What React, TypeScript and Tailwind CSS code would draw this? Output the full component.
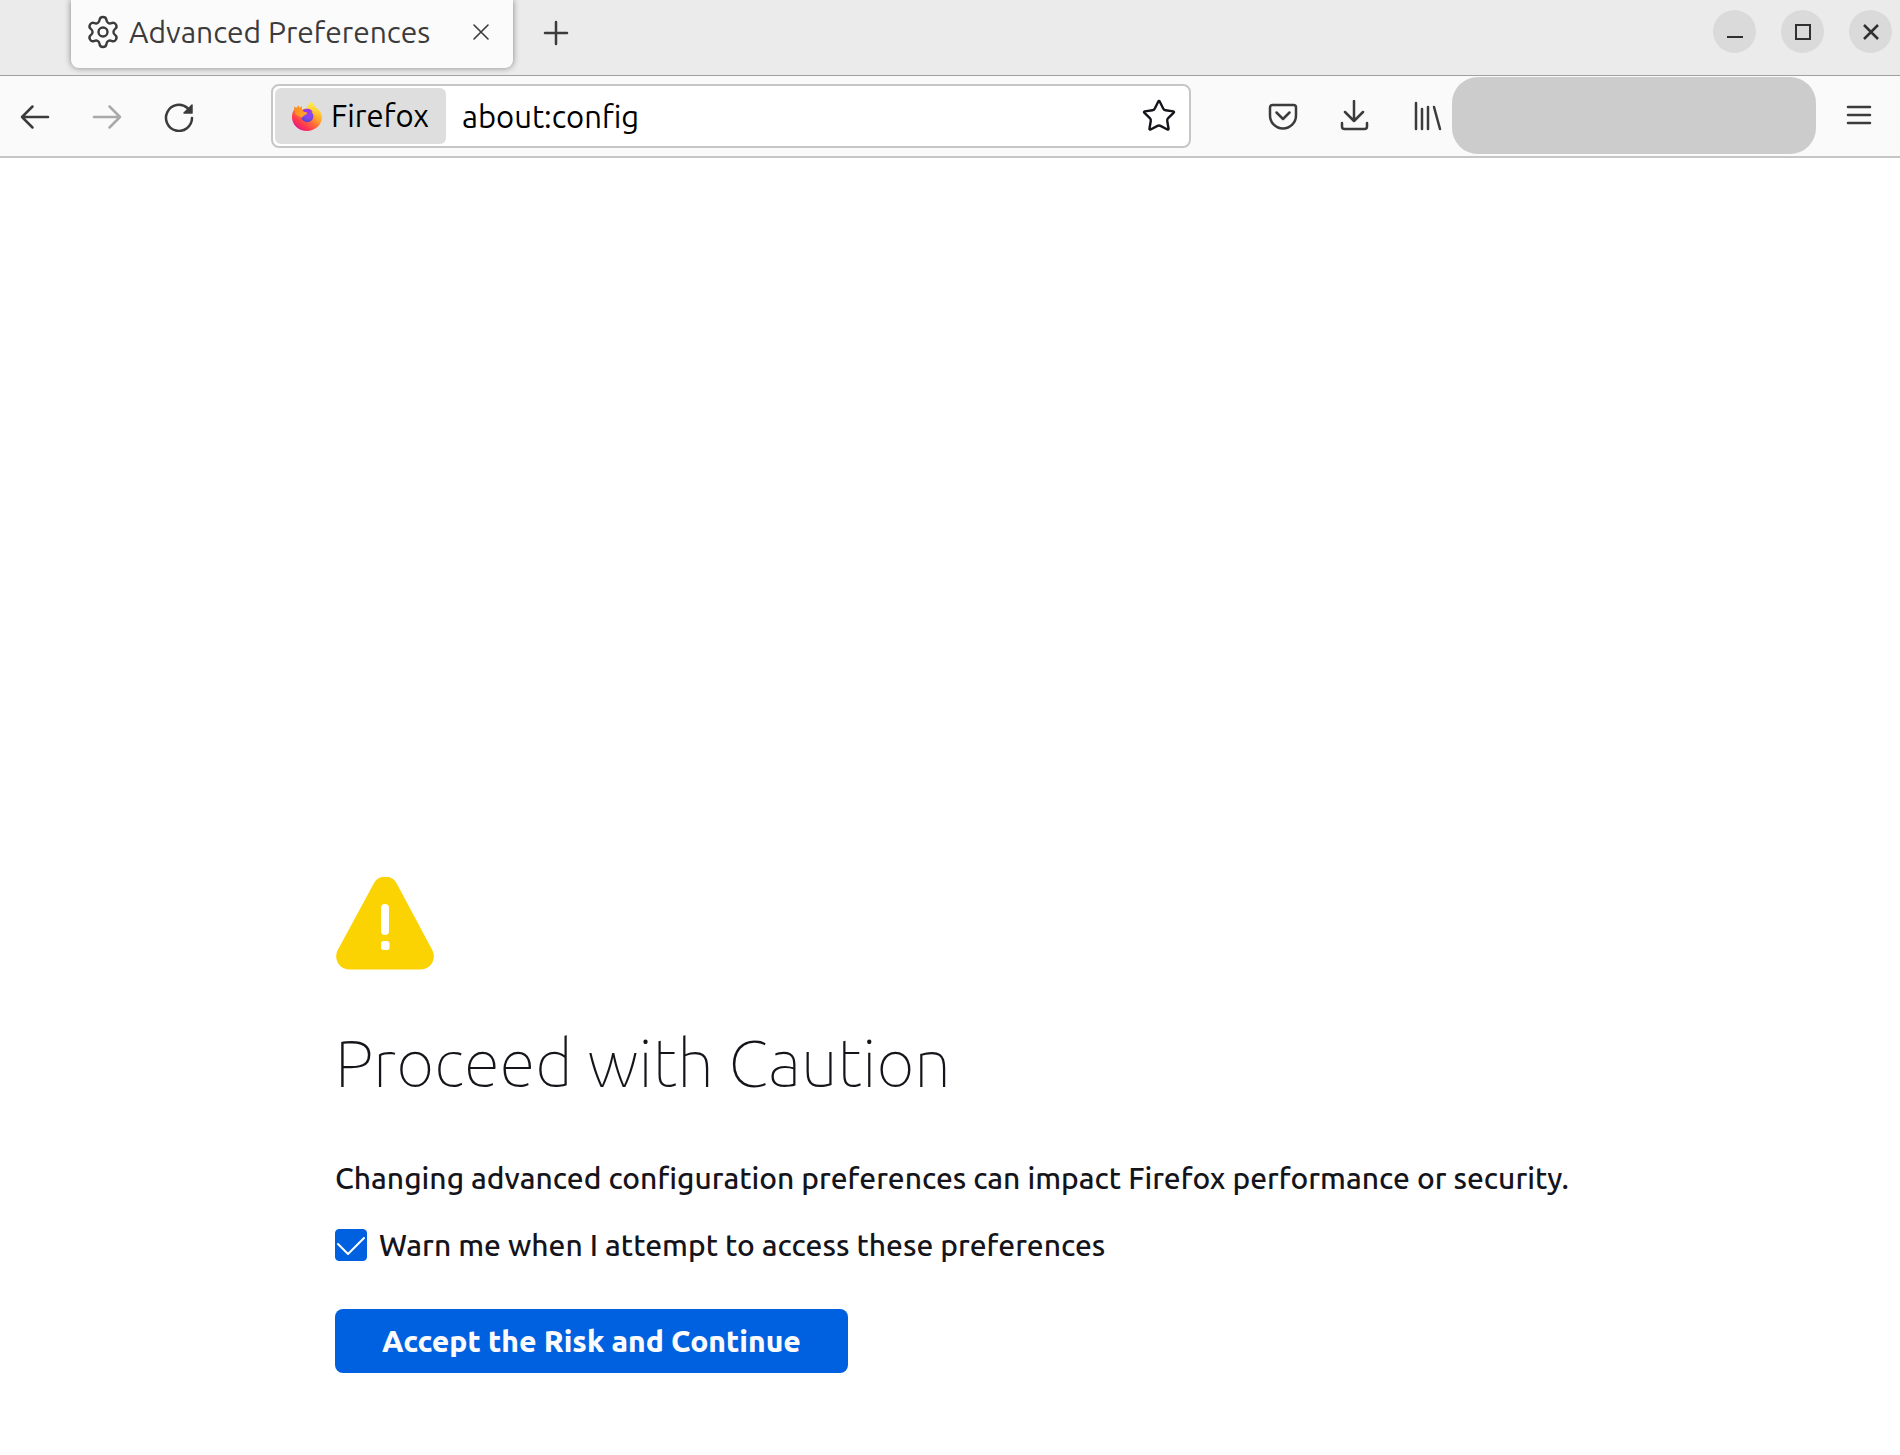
import { useState } from "react";
import type { ReactNode } from "react";
import { Settings, Star } from "lucide-react";

function FirefoxLogo() {
  return (
    <svg viewBox="0 0 30 30" className="size-[30px] shrink-0" aria-hidden="true">
      <defs>
        <linearGradient id="fx-body" x1="0.85" y1="0.1" x2="0.2" y2="0.95">
          <stop offset="0" stopColor="#fff44f" />
          <stop offset="0.3" stopColor="#ffb42a" />
          <stop offset="0.55" stopColor="#ff7139" />
          <stop offset="0.8" stopColor="#ff3750" />
          <stop offset="1" stopColor="#e31587" />
        </linearGradient>
        <linearGradient id="fx-tail" x1="0.5" y1="0" x2="0.5" y2="1">
          <stop offset="0" stopColor="#fff14a" />
          <stop offset="0.5" stopColor="#ffc832" />
          <stop offset="1" stopColor="#ff8a2b" stopOpacity="0" />
        </linearGradient>
        <radialGradient id="fx-globe" cx="0.6" cy="0.35" r="0.75">
          <stop offset="0" stopColor="#a23bf0" />
          <stop offset="0.5" stopColor="#7a4be8" />
          <stop offset="1" stopColor="#4d3fc4" />
        </radialGradient>
        <linearGradient id="fx-head" x1="0" y1="0" x2="1" y2="1">
          <stop offset="0" stopColor="#ff8a16" />
          <stop offset="1" stopColor="#ffa832" />
        </linearGradient>
      </defs>
      <path
        fill="url(#fx-body)"
        d="M19.6 0c.3 3.200 2.700 4.700 4.700 6.900.8.6 1.800 1.300 2.700 2.200 1.900 2.200 2.900 4.500 2.900 7.500C29.900 24 23.300 30 15 30S0 24 0 15.900C0 12.500 1.100 10 2.400 8.300L2.500 5.700 4.300 7 6.800 4.500 7.200 7.300 9.800 5.300 9.800 9c1.300-1.100 2.900-1.400 4.700-1.400 1.200-2.100 2.500-4.800 5.100-7.600z"
      />
      <path
        fill="url(#fx-tail)"
        d="M19.600 0c.3 3.200 2.700 4.700 4.700 6.900 3 1.900 4.400 5 3.600 9-.9 4.300-3.300 7-6.400 8.100 2.500-3.600 2.700-8.500.8-11.500-1.600-2.500-4.500-4.400-7.800-4.900 1.200-2.100 2.500-4.800 5.100-7.600z"
      />
      <circle cx="15.300" cy="15.200" r="6" fill="url(#fx-globe)" />
      <path fill="#9a35ee" d="M10.500 10.200c.8-2 3-2.600 5-2.400 2.600.2 4.500 1.400 5.200 3.300-1.600-.6-3.300-.5-4.500.3z" />
      <path
        fill="url(#fx-head)"
        d="M2.400 8.300L2.500 5.700 4.300 7 6.800 4.500l.4 2.800 2.600-2-.2 3.900c.9 1.200 2.300 1.800 4.200 1.900 1 .1 1.500.5 1.300 1.200-.4 1-1.600 1.500-3.200 2.400-.8.500-1.200 1-1.600 1.700-2-.3-5-1.600-7-3.500z"
      />
    </svg>
  );
}

function Icon({ children, label, faded = false }: { children: ReactNode; label: string; faded?: boolean }) {
  return (
    <button
      type="button"
      aria-label={label}
      disabled={faded}
      className="flex size-8 shrink-0 items-center justify-center text-[#3b3b3b] disabled:text-[#a9a9a9]"
    >
      <svg
        viewBox="0 0 32 32"
        className="size-8"
        fill="none"
        stroke="currentColor"
        strokeWidth="2.5"
        strokeLinecap="round"
        strokeLinejoin="round"
        aria-hidden="true"
      >
        {children}
      </svg>
    </button>
  );
}

function WindowButton({ children, label }: { children: ReactNode; label: string }) {
  return (
    <button
      type="button"
      aria-label={label}
      className="flex size-[43px] items-center justify-center rounded-full bg-[#dadada] text-[#303030]"
    >
      <svg viewBox="0 0 16 16" className="size-4" fill="none" stroke="currentColor" strokeWidth="2" aria-hidden="true">
        {children}
      </svg>
    </button>
  );
}

function TabStrip() {
  return (
    <header className="flex h-[76px] items-start border-b border-[#a0a0a0] bg-[#ebebeb] pl-[71px] pr-2">
      <div className="flex h-[68px] w-[442px] items-center rounded-b-lg bg-[#fbfbfb] pb-1 pl-[14px] pr-5 text-[#3b3b3b] shadow-[0_0_6px_rgba(0,0,0,0.45)]">
        <Settings className="size-9 shrink-0" strokeWidth={1.6} aria-hidden="true" />
        <span className="ml-2 flex-1 whitespace-nowrap text-[30px] leading-10">Advanced Preferences</span>
        <button type="button" aria-label="Close tab" className="flex size-6 items-center justify-center">
          <svg viewBox="0 0 24 24" className="size-6" fill="none" stroke="currentColor" strokeWidth="1.600" strokeLinecap="round">
            <path d="M5 5l14 14M19 5L5 19" />
          </svg>
        </button>
      </div>
      <button type="button" aria-label="New tab" className="ml-[27px] mt-[17px] flex size-8 items-center justify-center text-[#3b3b3b]">
        <svg viewBox="0 0 32 32" className="size-8" fill="none" stroke="currentColor" strokeWidth="2.5" strokeLinecap="round">
          <path d="M16 5v22M5 16h22" />
        </svg>
      </button>
      <div className="ml-auto mt-[10px] flex gap-[25px]">
        <WindowButton label="Minimize">
          <path d="M0 13h16" />
        </WindowButton>
        <WindowButton label="Maximize">
          <path d="M1 1h14v14H1z" />
        </WindowButton>
        <WindowButton label="Close">
          <path d="M1 1l14 14M15 1L1 15" strokeWidth="2.5" />
        </WindowButton>
      </div>
    </header>
  );
}

function Toolbar() {
  const [address, setAddress] = useState("about:config");
  return (
    <nav className="flex h-[82px] items-center border-b-2 border-[#c6c6c6] bg-[#fafafa] pl-[19px] pr-[25px]">
      <div className="flex gap-10">
        <Icon label="Back">
          <path d="M29 17H3M13.500 6.500L3 17l10.500 10.500" />
        </Icon>
        <Icon label="Forward" faded>
          <path d="M3 17h26M18.500 6.500L29 17 18.500 27.500" />
        </Icon>
        <Icon label="Reload">
          <path d="M29 18A13 13 0 1 1 24.500 8" />
          <path d="M29 5v8h-8z" fill="currentColor" strokeWidth="1.500" />
        </Icon>
      </div>
      <div className="ml-[76px] flex h-16 w-[920px] items-center rounded-lg border-2 border-[#c6c6c6] bg-white py-0.5 pl-0.5 pr-3">
        <button type="button" className="flex h-14 w-[171px] items-center gap-[9px] rounded-md bg-[#dedede] pl-[17px] text-[31px] leading-[42px] text-black">
          <FirefoxLogo />
          Firefox
        </button>
        <input
          aria-label="Address"
          value={address}
          onChange={(e) => setAddress(e.target.value)}
          className="ml-4 h-14 min-w-0 flex-1 bg-transparent text-[31px] text-black outline-none"
        />
        <button type="button" aria-label="Bookmark this page" className="text-[#15141a]">
          <Star className="size-9" strokeWidth={1.6} />
        </button>
      </div>
      <div className="ml-auto flex items-center">
        <div className="flex gap-10">
          <Icon label="Save to Pocket">
            <path d="M5.500 5h21a2.500 2.500 0 0 1 2.500 2.500V15.500a13 13 0 0 1-26 0V7.500A2.500 2.500 0 0 1 5.500 5z" />
            <path d="M9.500 12.500l6.500 6.500 6.500-6.500" />
          </Icon>
          <Icon label="Downloads">
            <path d="M15 1v20M6 12l9 9 9-9M3 23v3.500A2.500 2.500 0 0 0 5.500 29h20a2.500 2.500 0 0 0 2.500-2.500V23" />
          </Icon>
          <Icon label="Library">
            <path d="M5 3v26M11 9v20M17 7v22M23 7l6 22" />
          </Icon>
        </div>
        <div className="mb-0.5 ml-[9px] h-[77px] w-[364px] rounded-[26px] bg-[#cccccc]" />
        <div className="ml-[27px] flex">
          <Icon label="Open application menu">
            <path d="M5 7h22M5 15h22M5 23h22" />
          </Icon>
        </div>
      </div>
    </nav>
  );
}

function WarningSign() {
  return (
    <svg viewBox="0 0 98 93" className="ml-px h-[93px] w-[98px]" aria-hidden="true">
      <path
        fill="#fbd302"
        d="M37.500 7A13 13 0 0 1 61 7L96.500 73.500A13.200 13.200 0 0 1 85 92.500H13A13.200 13.200 0 0 1 1.500 73.500z"
      />
      <rect x="45" y="27" width="8" height="31" rx="4" fill="#fff" />
      <rect x="45" y="64" width="8.500" height="9" rx="2.500" fill="#fff" />
    </svg>
  );
}

export default function App() {
  const [warn, setWarn] = useState(true);
  return (
    <div className="flex min-h-screen flex-col bg-white font-['Ubuntu','Noto_Sans',sans-serif]">
      <TabStrip />
      <Toolbar />
      <main className="mx-auto flex w-full max-w-[1230px] flex-1 flex-col items-start justify-end pb-[82px] text-[#15141a]">
        <WarningSign />
        <h1 className="mt-12 text-[66px] font-thin leading-[88px]">Proceed with Caution</h1>
        <p className="mt-[52px] whitespace-nowrap text-[30px] font-medium leading-10">
          Changing advanced configuration preferences can impact Firefox performance or security.
        </p>
        <label className="mt-[27px] flex items-center gap-3 text-[30px] font-medium leading-10">
          <span className="grid size-8">
            <input
              type="checkbox"
              checked={warn}
              onChange={(e) => setWarn(e.target.checked)}
              className="peer col-start-1 row-start-1 size-8 appearance-none rounded border border-[#0061e0] bg-white checked:bg-[#0061e0]"
            />
            <svg
              viewBox="0 0 32 32"
              className="pointer-events-none invisible col-start-1 row-start-1 size-8 peer-checked:visible"
              fill="none"
              stroke="#fff"
              strokeWidth="2"
              strokeLinecap="round"
              strokeLinejoin="round"
              aria-hidden="true"
            >
              <path d="M3 15l10 10L29 9" />
            </svg>
          </span>
          Warn me when I attempt to access these preferences
        </label>
        <button type="button" className="mt-11 h-16 rounded-lg bg-[#0061e0] px-[47px] text-[30px] font-extrabold leading-10 text-[#fbfbfe]">
          Accept the Risk and Continue
        </button>
      </main>
    </div>
  );
}
